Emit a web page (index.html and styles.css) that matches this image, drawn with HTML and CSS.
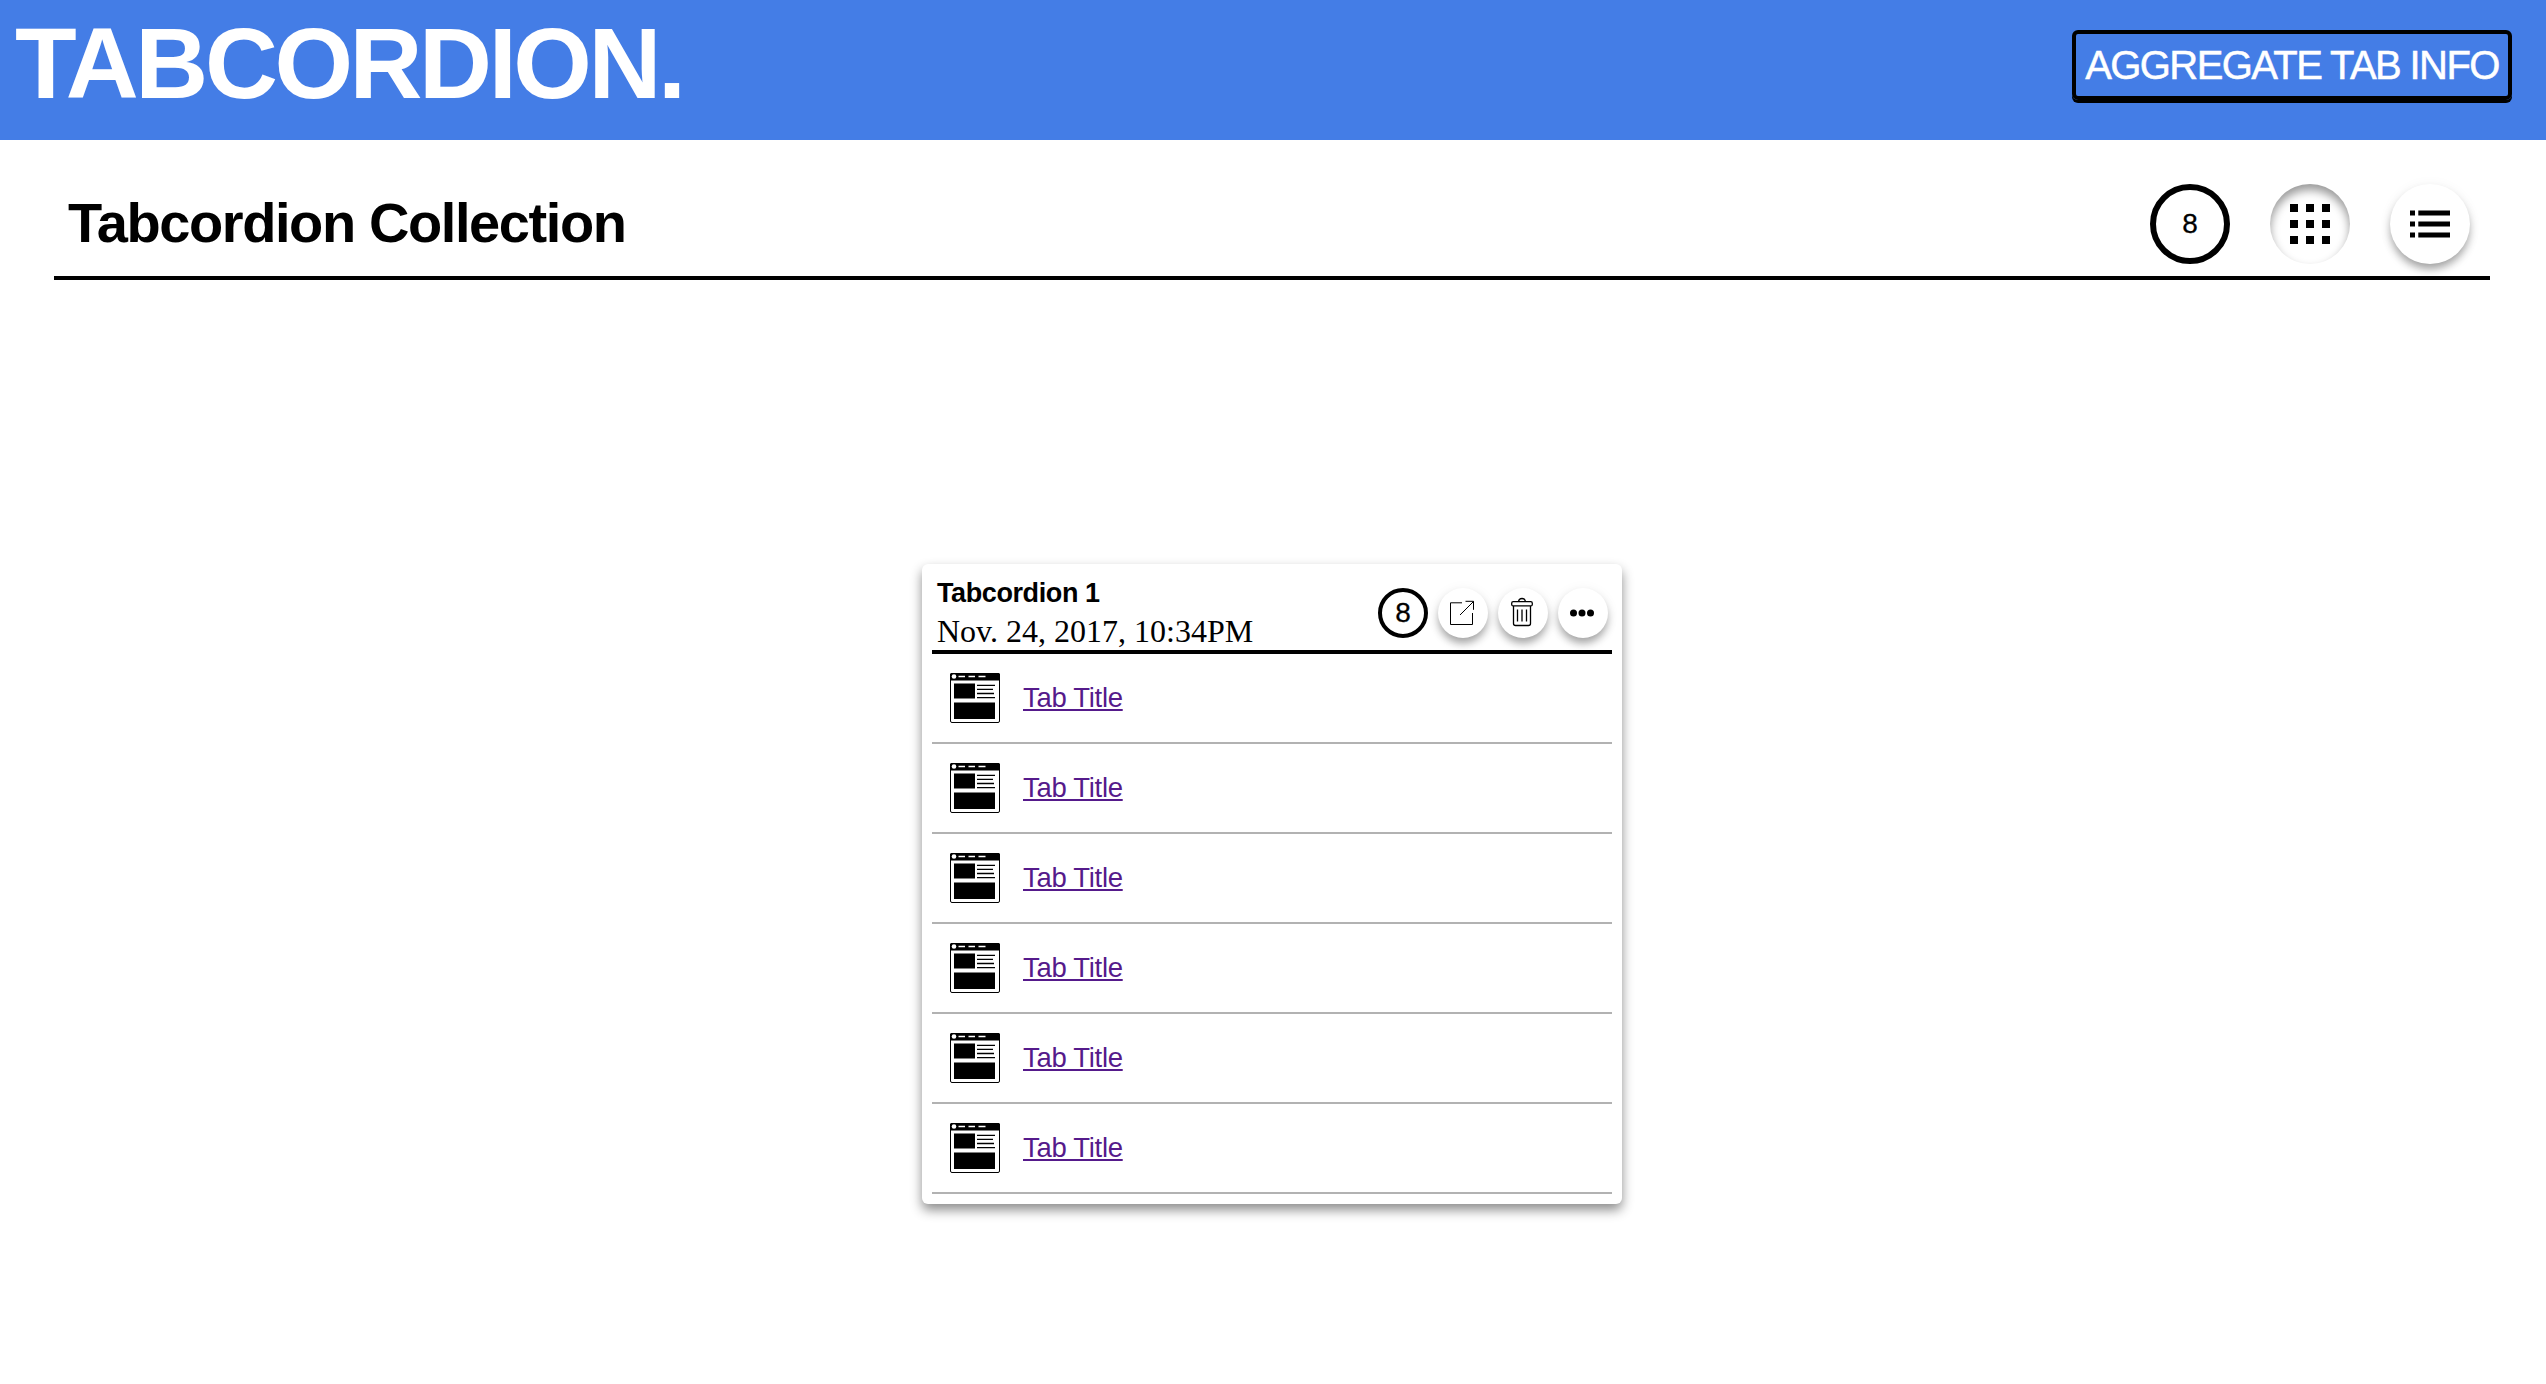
FILE: index.html
```html
<!DOCTYPE html>
<html lang="en">
<head>
<meta charset="utf-8">
<title>Tabcordion</title>
<link rel="stylesheet" href="styles.css">
</head>
<body>
<svg class="sprite" width="0" height="0" aria-hidden="true">
  <symbol id="page" viewBox="0 0 50 50">
    <rect x=".5" y=".5" width="49" height="49" rx="1.5" fill="#fff" stroke="#000"/>
    <path d="M1.5 0h47Q50 0 50 1.500V7.500H0V1.500Q0 0 1.500 0zM4 10.500h21v15H4zM4 29.500h41V46H4z"/>
    <path d="M8.500 3.500h6.500M18.500 3.500h6.500M28.500 3.500h7" stroke="#fff" stroke-width="1.500"/>
    <circle cx="4" cy="3.500" r="2.300" fill="#fff"/>
    <path d="M27 12.300h18M27 16.400h16M27 20.500h17M27 24.600h18" stroke="#000" stroke-width="1.300"/>
  </symbol>
</svg>
<header class="topbar">
  <h1 class="brand">TABCORDION.</h1>
  <button class="aggregate">AGGREGATE TAB INFO</button>
</header>
<main>
  <section class="collection-head">
    <h2 class="collection-title">Tabcordion Collection</h2>
    <div class="view-controls">
      <span class="count">8</span>
      <span class="round pressed"><svg width="40" height="40"><path d="M0 0h8v8H0zM16 0h8v8h-8zM32 0h8v8h-8zM0 16h8v8H0zM16 16h8v8h-8zM32 16h8v8h-8zM0 32h8v8H0zM16 32h8v8h-8zM32 32h8v8h-8z"/></svg></span>
      <span class="round"><svg width="40" height="40"><path d="M0 6.500h5v5H0zM8.300 6.500H40v5H8.300zM0 17.500h5v5H0zM8.300 17.500H40v5H8.300zM0 28.500h5v5H0zM8.300 28.500H40v5H8.300z"/></svg></span>
    </div>
  </section>
  <article class="card">
    <div class="card-head">
      <div>
        <h3 class="card-title">Tabcordion 1</h3>
        <div class="card-date">Nov. 24, 2017, 10:34PM</div>
      </div>
      <div class="card-actions">
        <span class="count small">8</span>
        <span class="round small"><svg width="50" height="50" fill="none" stroke="#000"><path d="M24 14.800H12.500v21.700h22V25M22 27l13.500-13.500M27.500 13.300h8v8.500"/></svg></span>
        <span class="round small"><svg width="50" height="50" fill="none" stroke="#000" stroke-width="1.300"><rect x="13.700" y="13.700" width="20.600" height="4.200" rx="1.500"/><path d="M20.500 13.500q.5-3 3.500-3t3.500 3M15.500 18v17.500q0 2 2 2h13q2 0 2-2V18M19.500 21.500v12M24 21.500v12M28.500 21.500v12"/></svg></span>
        <span class="round small"><svg width="50" height="50"><circle cx="15.500" cy="25" r="3.500"/><circle cx="24" cy="25" r="3.500"/><circle cx="32.500" cy="25" r="3.500"/></svg></span>
      </div>
    </div>
    <ul class="tabs">
      <li class="tab"><svg width="50" height="50"><use href="#page"/></svg><a class="tab-link" href="#">Tab Title</a></li>
      <li class="tab"><svg width="50" height="50"><use href="#page"/></svg><a class="tab-link" href="#">Tab Title</a></li>
      <li class="tab"><svg width="50" height="50"><use href="#page"/></svg><a class="tab-link" href="#">Tab Title</a></li>
      <li class="tab"><svg width="50" height="50"><use href="#page"/></svg><a class="tab-link" href="#">Tab Title</a></li>
      <li class="tab"><svg width="50" height="50"><use href="#page"/></svg><a class="tab-link" href="#">Tab Title</a></li>
      <li class="tab"><svg width="50" height="50"><use href="#page"/></svg><a class="tab-link" href="#">Tab Title</a></li>
    </ul>
  </article>
</main>
</body>
</html>
```
FILE: styles.css
```css
* { box-sizing: border-box; }
body { margin: 0; min-height: 1384px; background: #fff; color: #000; font-family: "Liberation Sans", Arial, sans-serif; }
h1, h2, h3, ul { margin: 0; padding: 0; }
svg { display: block; flex: none; }
.sprite { position: absolute; }
.topbar { display: flex; justify-content: space-between; align-items: flex-start; height: 140px; padding: 0 34px 0 15px; background: #447de6; }
.brand { color: #fff; font-size: 101px; line-height: 127px; letter-spacing: -3.4px; white-space: nowrap; }
.aggregate { width: 440px; height: 70px; margin-top: 30px; padding: 0; border: 4px solid #000; border-radius: 6px; background: transparent; box-shadow: 0 3px 0 #000; color: #fff; font: 40px/62px "Liberation Sans", Arial, sans-serif; letter-spacing: -1.6px; -webkit-text-stroke: .5px #fff; white-space: nowrap; }
.collection-head { display: flex; justify-content: space-between; align-items: flex-start; height: 140px; margin: 0 56px 0 54px; padding: 44px 20px 0 14px; border-bottom: 4px solid #000; }
.collection-title { font-size: 56px; line-height: 77px; letter-spacing: -1.4px; white-space: nowrap; }
.view-controls { display: flex; gap: 40px; }
.count { display: flex; align-items: center; justify-content: center; width: 80px; height: 80px; border: 6px solid #000; border-radius: 50%; font-size: 28px; -webkit-text-stroke: .3px #000; }
.round { display: flex; align-items: center; justify-content: center; width: 80px; height: 80px; border-radius: 50%; background: #fff; box-shadow: 0 6px 8px -1px rgba(0, 0, 0, .35), 0 2px 14px rgba(0, 0, 0, .06); }
.pressed { box-shadow: inset 0 6px 10px rgba(0, 0, 0, .4); }
.card { width: 700px; height: 640px; margin: 284px 0 0 922px; padding: 10px; border-radius: 6px; background: #fff; box-shadow: 0 6px 12px rgba(0, 0, 0, .45); }
.card-head { display: flex; justify-content: space-between; height: 80px; padding: 0 4px 0 5px; border-bottom: 4px solid #000; }
.card-title { font-size: 27px; line-height: 38px; letter-spacing: -.4px; }
.card-date { font: 32px/38px "Liberation Serif", "Times New Roman", serif; white-space: nowrap; }
.card-actions { display: flex; gap: 10px; padding-top: 14px; }
.small { width: 50px; height: 50px; }
.count.small { border-width: 4px; }
.tabs { list-style: none; }
.tab { display: flex; align-items: center; gap: 23px; height: 90px; padding-left: 18px; border-bottom: 2px solid #b2b2b2; }
.tab-link { color: #551a8b; font-size: 27.5px; letter-spacing: -.3px; text-underline-offset: 2px; text-decoration-thickness: 2px; }
```
